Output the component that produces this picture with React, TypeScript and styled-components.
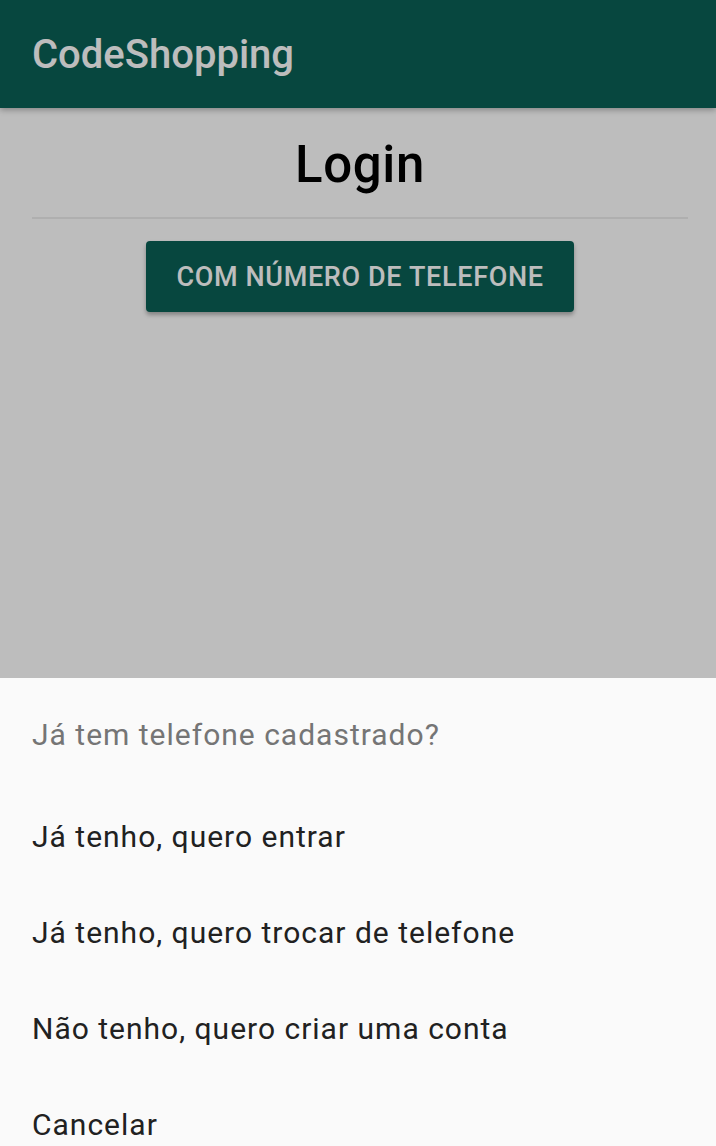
import React from 'react'
import styled, { createGlobalStyle } from 'styled-components'

const GlobalStyle = createGlobalStyle`
  html, body {
    margin: 0;
    padding: 0;
    height: 100%;
    background: #ffffff;
    font-family: Roboto, "Noto Sans", "Liberation Sans", sans-serif;
    -webkit-font-smoothing: antialiased;
  }
  #root {
    min-height: 100%;
  }
`

const Page = styled.div`
  display: flex;
  flex-direction: column;
  width: 100%;
  min-height: 100vh;
  background: #ffffff;
`

const Toolbar = styled.header`
  display: flex;
  align-items: center;
  height: 108px;
  padding: 0 32px;
  background: #0a6056;
  box-shadow: 0 2px 6px rgba(0, 0, 0, 0.3);
  position: relative;
  z-index: 1;
`

const AppTitle = styled.h1`
  margin: 0;
  font-size: 40px;
  font-weight: 500;
  color: #ffffff;
`

const Content = styled.main`
  display: flex;
  flex-direction: column;
  align-items: center;
  padding: 27px 28px 0 32px;
`

const Heading = styled.h2`
  margin: 0;
  line-height: 60px;
  font-size: 51px;
  font-weight: 500;
  letter-spacing: 0.6px;
  color: #000000;
`

const Divider = styled.hr`
  align-self: stretch;
  margin: 22px 0 0;
  height: 2px;
  border: none;
  background: #ececec;
`

const PrimaryButton = styled.button`
  margin-top: 22px;
  height: 71px;
  padding: 0 30px;
  border: none;
  border-radius: 4px;
  background: #0a6056;
  color: #ffffff;
  font-family: inherit;
  font-size: 27px;
  font-weight: 500;
  letter-spacing: 0.65px;
  text-transform: uppercase;
  box-shadow: 0 3px 4px rgba(0, 0, 0, 0.3);
`

const Scrim = styled.div`
  position: fixed;
  inset: 0;
  background: rgba(0, 0, 0, 0.26);
  z-index: 2;
`

const Sheet = styled.section`
  position: fixed;
  left: 0;
  right: 0;
  top: 678px;
  bottom: 0;
  display: flex;
  flex-direction: column;
  background: #fafafa;
  overflow: hidden;
  z-index: 3;
`

const SheetTitle = styled.div`
  display: flex;
  align-items: center;
  flex: none;
  height: 112px;
  margin-bottom: -2px;
  padding: 0 32px;
  font-size: 30px;
  letter-spacing: 1px;
  color: #757575;
`

const SheetItem = styled.div`
  display: flex;
  align-items: center;
  flex: none;
  height: 96px;
  padding: 0 32px;
  font-size: 30px;
  letter-spacing: 1px;
  color: #212121;
`

const options = [
  'Já tenho, quero entrar',
  'Já tenho, quero trocar de telefone',
  'Não tenho, quero criar uma conta',
  'Cancelar',
]

export default function App() {
  return (
    <>
      <GlobalStyle />
      <Page>
        <Toolbar>
          <AppTitle>CodeShopping</AppTitle>
        </Toolbar>
        <Content>
          <Heading>Login</Heading>
          <Divider />
          <PrimaryButton>Com número de telefone</PrimaryButton>
        </Content>
      </Page>
      <Scrim />
      <Sheet>
        <SheetTitle>Já tem telefone cadastrado?</SheetTitle>
        {options.map((label) => (
          <SheetItem key={label}>{label}</SheetItem>
        ))}
      </Sheet>
    </>
  )
}
